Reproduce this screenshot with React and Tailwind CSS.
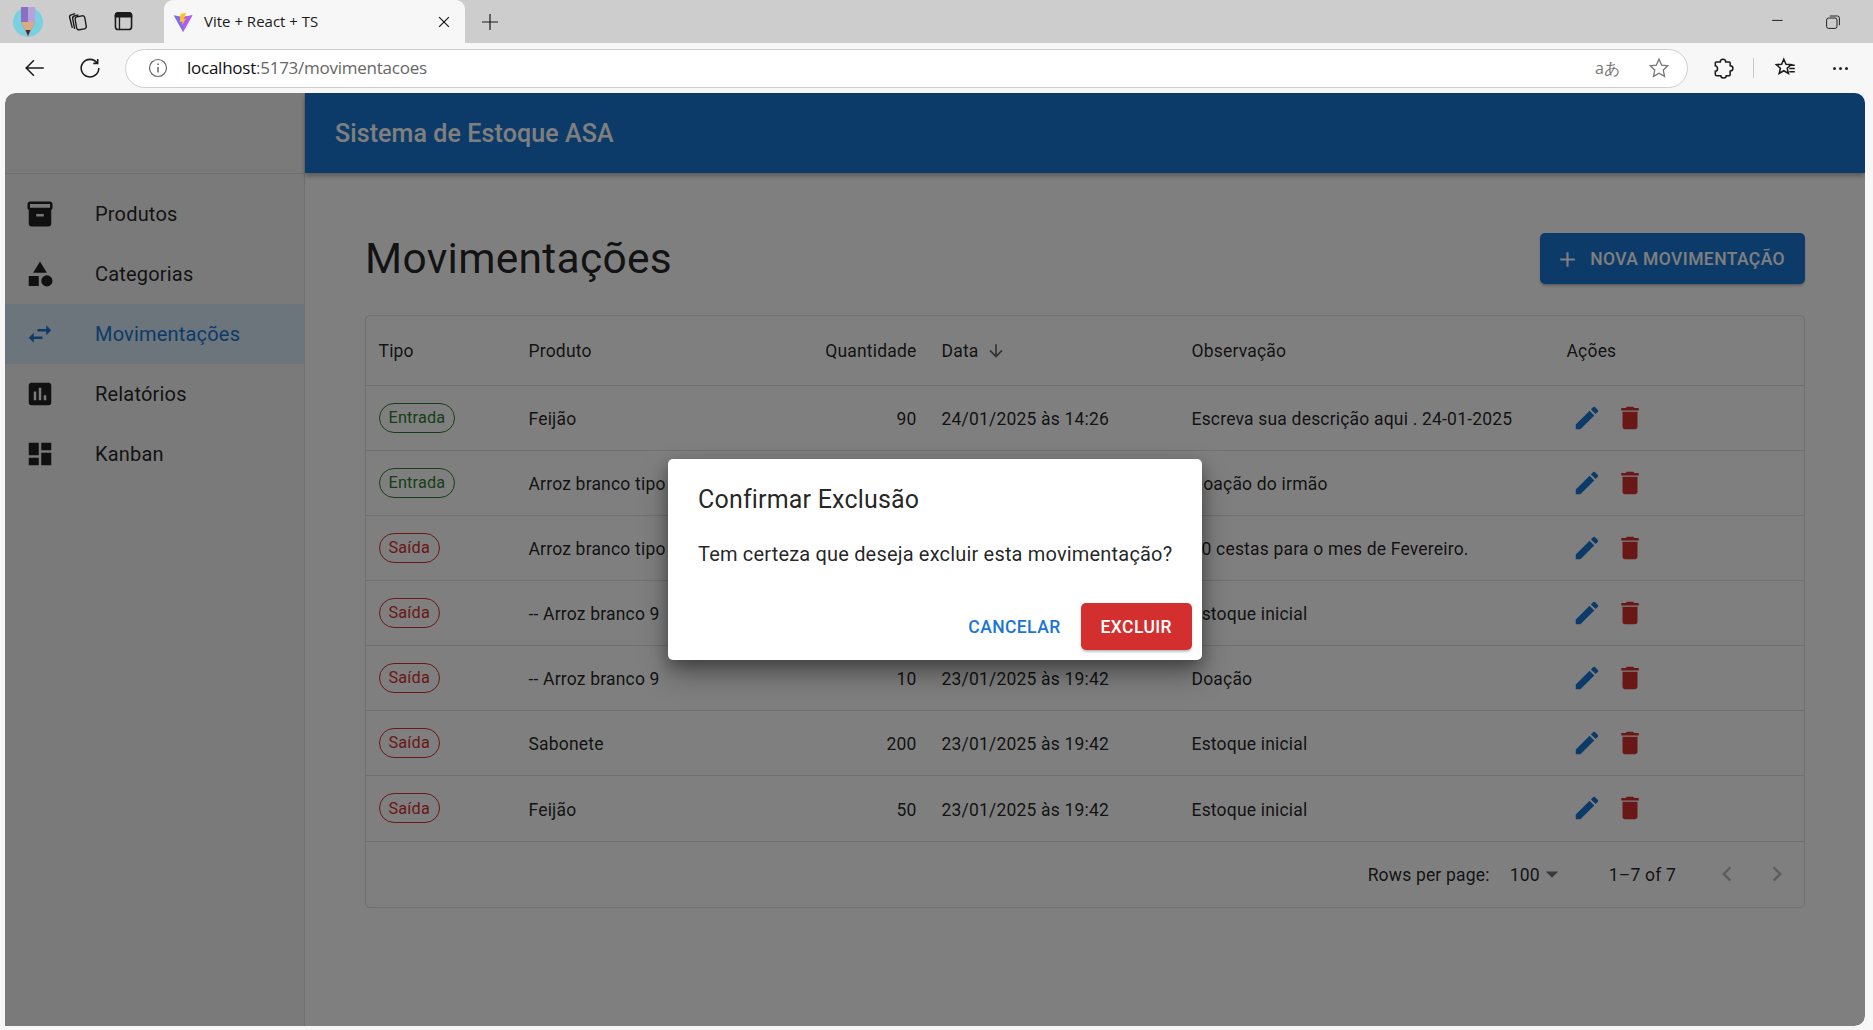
import React from "react";

const icons = {
  inventory: "M20 2H4c-1 0-2 .9-2 2v3.01c0 .72.43 1.34 1 1.69V20c0 1.1 1.1 2 2 2h14c.9 0 2-.9 2-2V8.7c.57-.35 1-.97 1-1.69V4c0-1.1-1-2-2-2m-5 12H9v-2h6zm5-7H4V4l16-.02z",
  category: "m12 2-5.5 9h11zM17.5 13a4.5 4.5 0 1 0 0 9 4.5 4.5 0 0 0 0-9zM3 13.5h8v8H3z",
  swap: "M6.99 11 3 15l3.99 4v-3H14v-2H6.99zM21 9l-3.99-4v3H10v2h7.01v3z",
  assessment: "M19 3H5c-1.1 0-2 .9-2 2v14c0 1.1.9 2 2 2h14c1.1 0 2-.9 2-2V5c0-1.1-.9-2-2-2M9 17H7v-7h2zm4 0h-2V7h2zm4 0h-2v-4h2z",
  dashboard: "M3 13h8V3H3zm0 8h8v-6H3zm10 0h8V11h-8zm0-18v6h8V3z",
  edit: "M3 17.25V21h3.75L17.81 9.94l-3.75-3.75zM20.71 7.04c.39-.39.39-1.02 0-1.41l-2.34-2.34a.9959.9959 0 0 0-1.41 0l-1.83 1.83 3.75 3.75z",
  trash: "M6 19c0 1.1.9 2 2 2h8c1.1 0 2-.9 2-2V7H6zM19 4h-3.5l-1-1h-5l-1 1H5v2h14z",
  add: "M19 13h-6v6h-2v-6H5v-2h6V5h2v6h6z",
  down: "m20 12-1.41-1.41L13 16.17V4h-2v12.17l-5.58-5.59L4 12l8 8z",
  left: "M15.41 7.41 14 6l-6 6 6 6 1.41-1.41L10.83 12z",
  right: "M10 6 8.59 7.41 13.17 12l-4.58 4.59L10 18l6-6z",
  caret: "m7 10 5 5 5-5z",
};

function Icon({ name, className }) {
  return (
    <svg viewBox="0 0 24 24" fill="currentColor" className={className}>
      <path d={icons[name]} />
    </svg>
  );
}

// thin stroked icons of the browser frame
function Line({ className, children, size = 20 }) {
  return (
    <svg viewBox="0 0 20 20" width={size} height={size} fill="none" stroke="currentColor" strokeWidth="1.2" className={className}>
      {children}
    </svg>
  );
}

function BrowserFrame() {
  return (
    <div className="flex-shrink-0 font-['Open_Sans',sans-serif] text-[#1b1b1b]">
      <div className="flex h-[43px] items-center bg-[#cdcdcd]">
        <div className="flex w-[164px] items-center pl-[13px]">
          <svg viewBox="0 0 30 30" width="30" height="30">
            <circle cx="15" cy="15" r="15" fill="#78d0e0" />
            <path d="M8 0h14v15l-7 15-7-15z" fill="#8d6fc0" />
            <path d="M15 0h7v15h-7z" fill="#b9a2dc" />
            <path d="M8 15h14l-7 15z" fill="#d8ab84" />
            <path d="M12.500 23h5l-2.500 6z" fill="#333" />
          </svg>
          <Line className="ml-[23px]" size={23}>
            <rect x="8.500" y="5.500" width="8.500" height="11.500" rx="2" transform="rotate(-10 12 11)" />
            <path d="M5.500 15.500 3.200 6.500c-.3-1.200.3-2 1.300-2.300l3.500-1" />
            <path d="M7.500 16.500 5.800 7.500c-.2-1.200.4-2 1.400-2.300l3.600-1" />
          </Line>
          <Line className="ml-[23px]" size={23}>
            <rect x="3" y="2.500" width="14" height="14.500" rx="2.500" strokeWidth="1.400" />
            <path d="M3 4.500A2 2 0 0 1 5 2.500h10a2 2 0 0 1 2 2V6H3z" fill="currentColor" />
            <path d="M6.500 6v11" />
          </Line>
        </div>
        <div className="flex h-full w-[301px] items-center rounded-t-[9px] bg-[#f7f7f7] pl-[9px] pr-[14px]">
          <svg viewBox="0 0 32 32" width="20" height="20">
            <path d="M1 5l15 27L31 5l-15 3z" fill="#7c6cf6" />
            <path d="M16 8l15-3-15 27z" fill="#b45cf0" />
            <path d="M21 1l-9 2-1 13 4-1-1 6 7-11-4 1z" fill="#ffc51e" />
          </svg>
          <span className="ml-[11px] flex-1 text-[15px]">Vite + React + TS</span>
          <Line size={14} className="stroke-[1.8]"><path d="M3 3l14 14M17 3 3 17" /></Line>
        </div>
        <Line size={20} className="ml-[15px]"><path d="M10 2v16M2 10h16" /></Line>
        <div className="flex-1" />
        <Line size={16} className="mr-[38px]"><path d="M1.500 8h13" /></Line>
        <Line size={16} className="mr-[32px]">
          <rect x="2" y="5" width="13" height="13" rx="2.500" />
          <path d="M6 2.500h9.500A2.500 2.500 0 0 1 18 5v9" />
        </Line>
      </div>
      <div className="flex h-[50px] items-center bg-[#f7f7f7]">
        <Line size={22} className="ml-[24px] stroke-[1.4]"><path d="M18 10H2M9 3l-7 7 7 7" /></Line>
        <Line size={22} className="ml-[33px] stroke-[1.4]">
          <path d="M16.500 5.500A8 8 0 1 0 18 10" /><path d="M13 5.800h4V1.800" />
        </Line>
        <div className="ml-[24px] flex h-[39px] w-[1563px] items-center rounded-full border border-[#cfcfcf] bg-white pl-[22px] pr-[17px]">
          <Line size={20} className="text-[#666]">
            <circle cx="10" cy="10" r="8.500" /><path d="M10 9v5.500M10 5.500v1.600" strokeWidth="1.500" />
          </Line>
          <span className="ml-[19px] flex-1 text-[17px] tracking-[-0.25px] text-[#666]">
            <span className="text-[#111]">localhost</span>:5173/movimentacoes
          </span>
          <span className="text-[16px] text-[#777]">aあ</span>
          <Line size={22} className="ml-[28px] text-[#777]">
            <path d="m10 2 2.400 5.300 5.600.7-4.100 3.900 1.100 5.700-5-2.900-5 2.900 1.100-5.700L2 8l5.600-.7z" />
          </Line>
        </div>
        <Line size={22} className="ml-[24px] stroke-[1.4]">
          <path d="M7.500 4.500C7.500 2.800 8.700 2 10 2s2.500.8 2.500 2.500h3.200c.5 0 .8.400.8.800v2.700c2 0 2.500 1.200 2.500 2.300s-.8 2.500-2.500 2.500v3.400c0 .5-.4.800-.8.800H13c0 1.600-1.200 2-2.500 2s-2.500-.6-2.500-2H4.500c-1 0-1.500-.6-1.500-1.300V13c1.500 0 2-1.400 2-2.500S4.200 8 3 8V5.300c0-.5.400-.8.800-.8z" />
        </Line>
        <div className="ml-[19px] h-[20px] w-[1px] bg-[#c9c9c9]" />
        <Line size={22} className="ml-[21px] stroke-[1.4]">
          <path d="m8 2 2 4.600 4.800.4-3.700 3.200 1.100 4.800L8 12.500 3.800 15l1.100-4.800L1.200 7 6 6.600z" />
          <path d="M13 7.500h5M13 10.500h5M13 13.500h5" />
        </Line>
        <div className="ml-[36px] flex gap-[3px]">
          <div className="h-[3px] w-[3px] rounded-full bg-[#222]" />
          <div className="h-[3px] w-[3px] rounded-full bg-[#222]" />
          <div className="h-[3px] w-[3px] rounded-full bg-[#222]" />
        </div>
      </div>
    </div>
  );
}

const navItems = [
  { label: "Produtos", icon: "inventory" },
  { label: "Categorias", icon: "category" },
  { label: "Movimentações", icon: "swap", active: true },
  { label: "Relatórios", icon: "assessment" },
  { label: "Kanban", icon: "dashboard" },
];

function Sidebar() {
  return (
    <div className="flex w-[300px] flex-shrink-0 flex-col border-r border-[#e0e0e0] bg-[#f5f5f5]">
      <div className="h-[81px] flex-shrink-0 border-b border-[#e0e0e0]" />
      <nav className="pt-[10px]">
        {navItems.map((item) => (
          <div
            key={item.label}
            className={`flex h-[60px] items-center pl-[20px] text-[20px] tracking-[0.19px] ${
              item.active ? "bg-[#d8e9f8] text-[#1976d2]" : "text-black/87"
            }`}
          >
            <div className="w-[70px]">
              <Icon name={item.icon} className={`h-[30px] w-[30px] ${item.active ? "text-[#1976d2]" : "text-black/87"}`} />
            </div>
            {item.label}
          </div>
        ))}
      </nav>
    </div>
  );
}

const rows = [
  { tipo: "Entrada", produto: "Feijão", qtd: 90, data: "24/01/2025 às 14:26", obs: "Escreva sua descrição aqui . 24-01-2025" },
  { tipo: "Entrada", produto: "Arroz branco tipo 1", qtd: 100, data: "24/01/2025 às 10:12", obs: "Doação do irmão" },
  { tipo: "Saída", produto: "Arroz branco tipo 1", qtd: 20, data: "23/01/2025 às 20:05", obs: "10 cestas para o mes de Fevereiro." },
  { tipo: "Saída", produto: "-- Arroz branco 9", qtd: 30, data: "23/01/2025 às 19:42", obs: "Estoque inicial" },
  { tipo: "Saída", produto: "-- Arroz branco 9", qtd: 10, data: "23/01/2025 às 19:42", obs: "Doação" },
  { tipo: "Saída", produto: "Sabonete", qtd: 200, data: "23/01/2025 às 19:42", obs: "Estoque inicial" },
  { tipo: "Saída", produto: "Feijão", qtd: 50, data: "23/01/2025 às 19:42", obs: "Estoque inicial" },
];

function Chip({ tipo }) {
  const isIn = tipo === "Entrada";
  return (
    <span
      className={`inline-flex h-[30px] items-center rounded-full border px-[9px] pt-[2px] align-middle text-[16.25px] ${
        isIn ? "border-[#2e7d32] text-[#2e7d32]" : "border-[#d32f2f] text-[#d32f2f]"
      }`}
    >
      {tipo}
    </span>
  );
}

function MovTable() {
  return (
    <div className="overflow-hidden rounded-[5px] border border-[#e0e0e0] bg-white text-[17.5px] tracking-[0.19px] text-black/87">
      <table className="w-full table-fixed border-collapse">
        <colgroup>
          <col className="w-[150px]" />
          <col className="w-[250px]" />
          <col className="w-[163px]" />
          <col className="w-[250px]" />
          <col className="w-[375px]" />
          <col />
        </colgroup>
        <thead>
          <tr className="h-[69px] border-b border-[#e0e0e0]">
            <th className="px-[12.500px] pt-[2px] text-left font-normal">Tipo</th>
            <th className="px-[12.500px] pt-[2px] text-left font-normal">Produto</th>
            <th className="px-[12.500px] pt-[2px] text-right font-normal">Quantidade</th>
            <th className="px-[12.500px] pt-[2px] text-left font-normal">
              <span className="flex items-center gap-[7px]">
                Data
                <Icon name="down" className="h-[20px] w-[20px] text-black/60" />
              </span>
            </th>
            <th className="px-[12.500px] pt-[2px] text-left font-normal">Observação</th>
            <th className="px-[12.500px] pt-[2px] text-left font-normal">Ações</th>
          </tr>
        </thead>
        <tbody>
          {rows.map((r, i) => (
            <tr key={i} className={`border-b border-[#e0e0e0] ${i === 6 ? "h-[66px]" : "h-[65px]"}`}>
              <td className="px-[12.500px]"><Chip tipo={r.tipo} /></td>
              <td className="truncate px-[12.500px] pt-[4px]">{r.produto}</td>
              <td className="px-[12.500px] pt-[4px] text-right">{r.qtd}</td>
              <td className="px-[12.500px] pt-[4px]">{r.data}</td>
              <td className="truncate px-[12.500px] pt-[4px]">{r.obs}</td>
              <td className="px-[12.500px]">
                <div className="flex gap-[3px]">
                  <div className="flex h-[40px] w-[40px] items-center justify-center">
                    <Icon name="edit" className="h-[30px] w-[30px] text-[#1976d2]" />
                  </div>
                  <div className="flex h-[40px] w-[40px] items-center justify-center">
                    <Icon name="trash" className="h-[30px] w-[30px] text-[#d32f2f]" />
                  </div>
                </div>
              </td>
            </tr>
          ))}
        </tbody>
      </table>
      <div className="flex h-[65px] items-center justify-end pr-[12px]">
        <span className="pt-[2px]">Rows per page:</span>
        <span className="ml-[20px] pt-[2px]">100</span>
        <Icon name="caret" className="-ml-[3px] h-[30px] w-[30px] text-black/54" />
        <span className="ml-[42px] pt-[2px]">1–7 of 7</span>
        <Icon name="left" className="ml-[36px] h-[30px] w-[30px] text-black/26" />
        <Icon name="right" className="ml-[20px] h-[30px] w-[30px] text-black/26" />
      </div>
    </div>
  );
}

function ConfirmDialog() {
  return (
    <div className="absolute inset-0 flex items-center justify-center rounded-t-[10px] rounded-br-[10px] bg-black/50">
      <div className="w-[534px] rounded-[5px] bg-white text-black/87 shadow-[0_14px_28px_rgba(0,0,0,0.35),0_5px_14px_rgba(0,0,0,0.25)]">
        <div className="flex h-[80px] items-center px-[30px] pt-[2px] text-[25px] tracking-[0.19px]">
          Confirmar Exclusão
        </div>
        <div className="whitespace-nowrap px-[30px] pb-[24px] text-[20px] leading-[30px] tracking-[0.18px]">
          Tem certeza que deseja excluir esta movimentação?
        </div>
        <div className="flex items-center justify-end gap-[10px] p-[10px] text-[17.5px] font-medium tracking-[0.4px]">
          <button className="h-[47px] px-[10px] pt-[2px] text-[#1976d2]">CANCELAR</button>
          <button className="h-[47px] rounded-[5px] bg-[#d32f2f] px-[20px] pt-[2px] text-white shadow-[0_3px_3px_-2px_rgba(0,0,0,0.2),0_2px_3px_rgba(0,0,0,0.14)]">
            EXCLUIR
          </button>
        </div>
      </div>
    </div>
  );
}

export default function App() {
  return (
    <div className="flex h-screen w-full flex-col overflow-hidden bg-[#f7f7f7]">
      <BrowserFrame />
      <div className="flex min-h-0 flex-1 pb-[4px] pl-[5px] pr-[8px]">
        <div className="relative flex flex-1 overflow-hidden rounded-t-[10px] rounded-br-[10px] bg-white font-['Roboto',sans-serif]">
          <Sidebar />
          <div className="flex min-w-0 flex-1 flex-col">
            <header className="flex h-[80px] flex-shrink-0 items-center bg-[#1976d2] pl-[30px] pt-[2px] text-[25px] font-medium tracking-[0.1px] text-white shadow-[0_3px_5px_rgba(0,0,0,0.3)]">
              Sistema de Estoque ASA
            </header>
            <main className="p-[60px]">
              <div className="mb-[31px] flex items-center justify-between">
                <h1 className="text-[42.5px] leading-[51px] tracking-[0.3px] text-black/87">Movimentações</h1>
                <button className="flex h-[51px] items-center rounded-[5px] bg-[#1976d2] pl-[15px] pr-[20px] pt-[1px] text-[17.5px] font-medium tracking-[0.4px] text-white shadow-[0_3px_3px_-2px_rgba(0,0,0,0.2),0_2px_3px_rgba(0,0,0,0.14)]">
                  <Icon name="add" className="mr-[10px] h-[25px] w-[25px]" />
                  NOVA MOVIMENTAÇÃO
                </button>
              </div>
              <MovTable />
            </main>
          </div>
          <ConfirmDialog />
        </div>
      </div>
    </div>
  );
}
